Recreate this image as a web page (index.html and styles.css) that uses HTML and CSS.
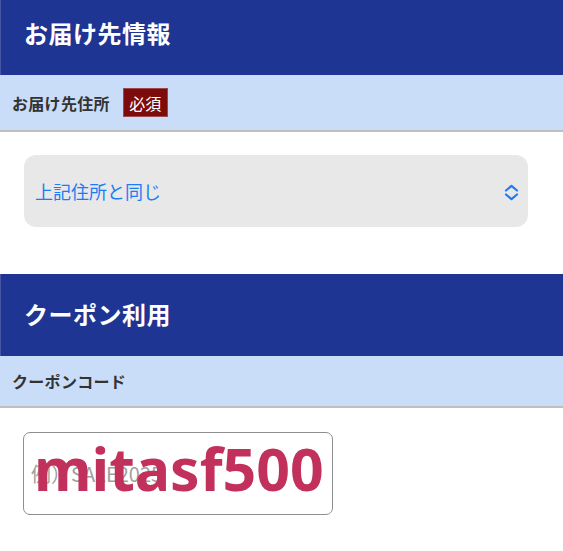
FILE: index.html
```html
<!DOCTYPE html>
<html lang="ja">
<head>
    <meta charset="UTF-8">
    <meta name="viewport" content="width=device-width, initial-scale=1.0">
    <title>お届け先情報</title>
    <link rel="stylesheet" href="styles.css">
</head>
<body>
    <section class="section section-first">
        <h2 class="section-title">お届け先情報</h2>
        <div class="field-label">
            <span>お届け先住所</span>
            <span class="badge">必須</span>
        </div>
        <div class="field-body">
            <div class="select">
                <span>上記住所と同じ</span>
                <svg class="select-arrow" width="15" height="17" viewBox="0 0 15 17">
                    <path d="M2 6.5 L7.5 1.8 L13 6.5 M2 10.5 L7.5 15.2 L13 10.5" fill="none" stroke="#1a7df6" stroke-width="2.2" stroke-linecap="round" stroke-linejoin="round"/>
                </svg>
            </div>
        </div>
    </section>

    <section class="section">
        <h2 class="section-title">クーポン利用</h2>
        <div class="field-label">
            <span>クーポンコード</span>
        </div>
        <div class="field-body">
            <div class="coupon">
                <input class="coupon-input" type="text" placeholder="例）SALE2025">
                <div class="coupon-code">mitasf500</div>
            </div>
        </div>
    </section>
</body>
</html>
```

FILE: styles.css
```css
:root {
    --navy: #1f3593;
    --pale: #c9ddf9;
    --line: #bfbfbf;
    --text: #333333;
    --badge: #7c0b0b;
    --link: #1a7df6;
    --code: #c1315c;
}

* {
    box-sizing: border-box;
    margin: 0;
    padding: 0;
}

body {
    font-family: "Noto Sans CJK JP", "Noto Sans", sans-serif;
    color: var(--text);
    background: #ffffff;
    overflow: hidden;
}

.section {
    margin-top: 47px;
}

.section-first {
    margin-top: -7px;
}

.section-title {
    height: 82px;
    display: flex;
    align-items: center;
    padding-left: 23px;
    padding-bottom: 3px;
    background: var(--navy);
    border-left: 1px solid #4656a3;
    color: #ffffff;
    font-size: 24px;
    font-weight: 700;
    letter-spacing: 0.5px;
}

.field-label {
    display: flex;
    align-items: center;
    gap: 13px;
    padding: 13px 12px;
    min-height: 49px;
    background: var(--pale);
    border-bottom: 2px solid var(--line);
    font-size: 16px;
    font-weight: 700;
    letter-spacing: 0.3px;
}

.badge {
    display: inline-flex;
    align-items: center;
    justify-content: center;
    width: 45px;
    height: 29px;
    background: var(--badge);
    border: 1px solid #9a4a4a;
    color: #ffffff;
    font-size: 16px;
    font-weight: 400;
    letter-spacing: 0;
}

.field-body {
    padding: 23px 35px 0 24px;
}

.select {
    display: flex;
    align-items: center;
    justify-content: space-between;
    height: 72px;
    padding: 0 9px 0 11px;
    background: #e8e8e8;
    border-radius: 12px;
    color: var(--link);
    font-size: 18px;
}

.select-arrow {
    display: block;
    margin-top: 2px;
}

.coupon {
    position: relative;
    width: 310px;
    margin-left: -1px;
    margin-top: 1px;
}

.coupon-input {
    display: block;
    width: 100%;
    height: 83px;
    padding: 0 7px;
    border: 1px solid #8e8e8e;
    border-radius: 7px;
    font-family: inherit;
    font-size: 20px;
    color: var(--text);
    background: #ffffff;
}

.coupon-input::placeholder {
    color: #a0a0a0;
}

.coupon-code {
    position: absolute;
    left: 11px;
    top: -6px;
    height: 83px;
    display: flex;
    align-items: center;
    font-family: "Noto Sans", sans-serif;
    font-size: 59px;
    font-weight: 700;
    color: var(--code);
    pointer-events: none;
}
```
